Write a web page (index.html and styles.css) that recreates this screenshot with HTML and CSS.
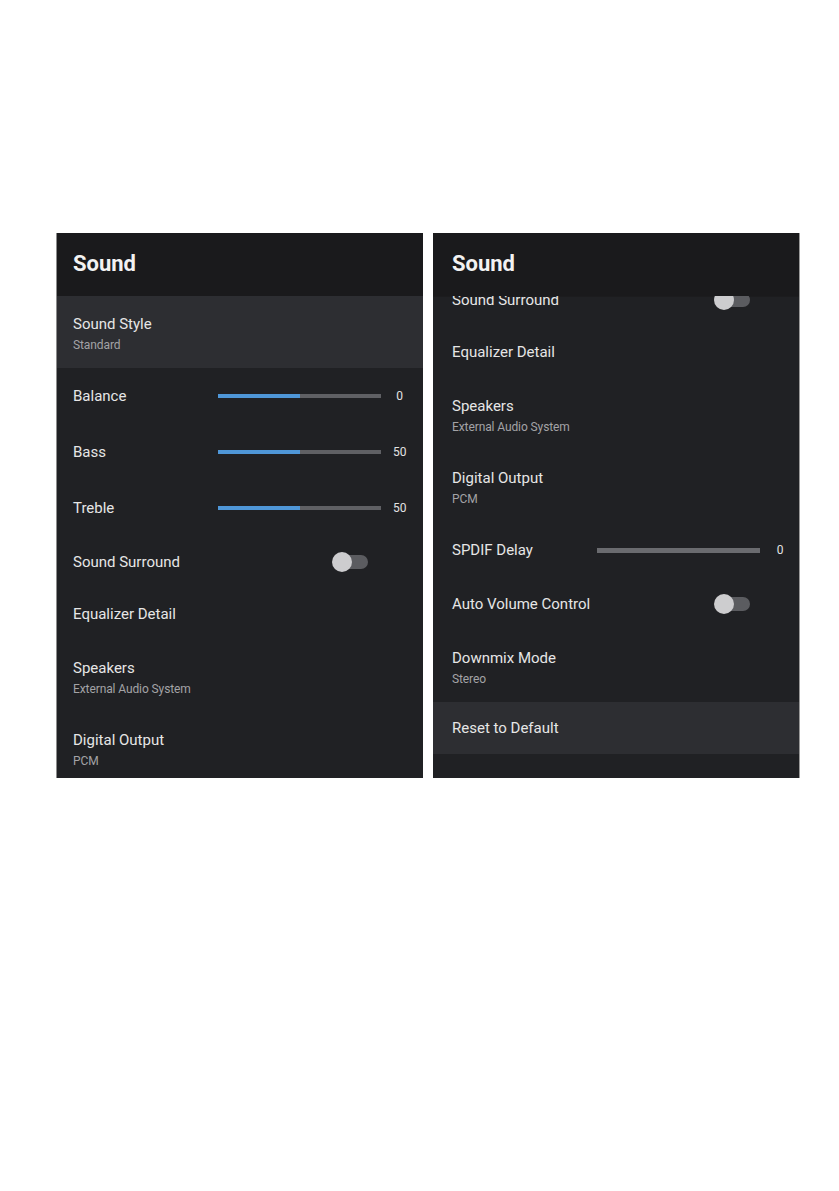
FILE: index.html
```html
<!DOCTYPE html>
<html lang="en">
<head>
<meta charset="utf-8">
<title>Sound settings</title>
<link rel="stylesheet" href="styles.css">
</head>
<body>
<div class="page">
  <section class="panel panel--left">
    <header class="panel-header"><h1 class="panel-title">Sound</h1></header>
    <div class="list-viewport">
      <ul class="list">
        <li class="row row--two row--focus"><span class="row-title">Sound Style</span><span class="row-sub">Standard</span></li>
        <li class="row row--slider"><span class="row-label">Balance</span><span class="track"><span class="fill" style="width:50%"></span></span><span class="value">0</span></li>
        <li class="row row--slider"><span class="row-label">Bass</span><span class="track"><span class="fill" style="width:50%"></span></span><span class="value">50</span></li>
        <li class="row row--slider"><span class="row-label">Treble</span><span class="track"><span class="fill" style="width:50%"></span></span><span class="value">50</span></li>
        <li class="row row--toggle"><span class="row-label">Sound Surround</span><span class="toggle"></span></li>
        <li class="row row--one"><span class="row-label">Equalizer Detail</span></li>
        <li class="row row--two"><span class="row-title">Speakers</span><span class="row-sub">External Audio System</span></li>
        <li class="row row--two"><span class="row-title">Digital Output</span><span class="row-sub">PCM</span></li>
      </ul>
    </div>
  </section>
  <section class="panel panel--right">
    <header class="panel-header"><h1 class="panel-title">Sound</h1></header>
    <div class="list-viewport">
      <ul class="list list--scrolled">
        <li class="row row--toggle"><span class="row-label">Sound Surround</span><span class="toggle"></span></li>
        <li class="row row--one"><span class="row-label">Equalizer Detail</span></li>
        <li class="row row--two"><span class="row-title">Speakers</span><span class="row-sub">External Audio System</span></li>
        <li class="row row--two"><span class="row-title">Digital Output</span><span class="row-sub">PCM</span></li>
        <li class="row row--slider"><span class="row-label">SPDIF Delay</span><span class="track track--thick"><span class="fill" style="width:0%"></span></span><span class="value">0</span></li>
        <li class="row row--toggle"><span class="row-label">Auto Volume Control</span><span class="toggle"></span></li>
        <li class="row row--two"><span class="row-title">Downmix Mode</span><span class="row-sub">Stereo</span></li>
        <li class="row row--one row--focus"><span class="row-label">Reset to Default</span></li>
      </ul>
    </div>
  </section>
</div>
</body>
</html>
```

FILE: styles.css
```css
* { box-sizing: border-box; }

html, body {
  margin: 0;
  padding: 0;
  background: #ffffff;
}

body {
  font-family: Roboto, "Liberation Sans", Arial, sans-serif;
}

.page {
  display: flex;
  gap: 10px;
  padding: 233px 0 0 56px;
}

.panel {
  width: 367px;
  height: 545px;
  background: #202124;
  display: flex;
  flex-direction: column;
  overflow: hidden;
  --pad-l: 17px;
  --pad-r: 17px;
}

.panel--left {
  border-left: 1px solid #8c8c8c;
  --pad-l: 16px;
}

.panel--right {
  border-right: 1px solid #9a9a9a;
  --pad-l: 19px;
  --pad-r: 11px;
}

.panel-header {
  flex: none;
  height: 63px;
  background: #1a1a1c;
  display: flex;
  align-items: center;
  padding: 0 var(--pad-r) 2px var(--pad-l);
  box-shadow: 0 1px 0 #1c1c1e;
}

.panel-title {
  margin: 0;
  font-size: 22px;
  font-weight: 700;
  color: #f2f2f2;
  letter-spacing: 0;
}

.list-viewport {
  flex: 1;
  overflow: hidden;
}

.list {
  list-style: none;
  margin: 0;
  padding: 0;
}

.list--scrolled {
  margin-top: -22px;
}

.row {
  display: flex;
  align-items: center;
  padding: 0 var(--pad-r) 0 var(--pad-l);
  color: #e6e6e6;
  font-size: 15px;
  line-height: 18px;
}

.row--focus {
  background: #2d2e32;
}

.row--one,
.row--toggle {
  height: 52px;
}

.row--slider {
  height: 56px;
}

.row--two {
  height: 72px;
  flex-direction: column;
  align-items: flex-start;
  justify-content: center;
  padding-top: 3px;
}

.row-title {
  display: block;
  line-height: 18px;
}

.row-sub {
  display: block;
  margin-top: 4px;
  font-size: 12px;
  line-height: 16px;
  color: #a3a3a6;
  letter-spacing: -0.1px;
}

.row--slider .row-label {
  flex: none;
  width: 145px;
}

.track {
  flex: none;
  width: 163px;
  height: 4px;
  background: #5f6064;
  display: flex;
}

.track--thick {
  height: 5px;
  background: #6a6b6f;
}

.fill {
  display: block;
  height: 100%;
  background: #4f97d8;
}

.value {
  flex: 1;
  padding-left: 12px;
  text-align: center;
  font-size: 12px;
  color: #e3e3e3;
}

.row--toggle .row-label {
  flex: 1;
}

.toggle {
  flex: none;
  position: relative;
  width: 36px;
  height: 20px;
  margin-right: 38px;
}

.toggle::before {
  content: "";
  position: absolute;
  left: 4px;
  right: 0;
  top: 3px;
  height: 14px;
  border-radius: 7px;
  background: #5b5c60;
}

.toggle::after {
  content: "";
  position: absolute;
  left: 0;
  top: 0;
  width: 20px;
  height: 20px;
  border-radius: 50%;
  background: #cdcdcf;
}
```
